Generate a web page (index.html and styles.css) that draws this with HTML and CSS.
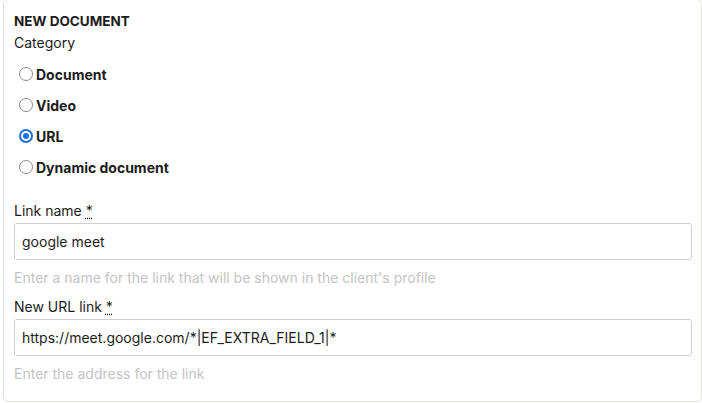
FILE: index.html
```html
<!DOCTYPE html>
<html lang="en">
<head>
<meta charset="utf-8">
<title>New document</title>
<link rel="stylesheet" href="styles.css">
</head>
<body>
<div class="card">
  <h2 class="title">NEW DOCUMENT</h2>
  <div class="group-label">Category</div>
  <div class="radios">
    <label class="radio"><input type="radio" name="cat"><span>Document</span></label>
    <label class="radio"><input type="radio" name="cat"><span>Video</span></label>
    <label class="radio"><input type="radio" name="cat" checked><span>URL</span></label>
    <label class="radio"><input type="radio" name="cat"><span>Dynamic document</span></label>
  </div>
  <div class="field">
    <label class="label">Link name <abbr title="required">*</abbr></label>
    <input class="input" type="text" value="google meet">
    <div class="help">Enter a name for the link that will be shown in the client's profile</div>
  </div>
  <div class="field">
    <label class="label">New URL link <abbr title="required">*</abbr></label>
    <input class="input" type="text" value="https://meet.google.com/*|EF_EXTRA_FIELD_1|*">
    <div class="help">Enter the address for the link</div>
  </div>
</div>
</body>
</html>
```
FILE: styles.css
```css
html, body {
  margin: 0;
  padding: 0;
  background: #ffffff;
}
body {
  font-family: Inter, "Liberation Sans", sans-serif;
  color: #1c1c1c;
  font-size: 14px;
}
.card {
  box-sizing: border-box;
  width: 699px;
  height: 403px;
  margin: -1px 0 0 3px;
  border: 1px solid #e4e2da;
  border-radius: 5px;
  padding: 12px 9px 0 10px;
}
.title {
  margin: 0;
  font-size: 13.5px;
  font-weight: 700;
  line-height: 18px;
}
.group-label {
  font-size: 14px;
  line-height: 18px;
  margin-top: 4px;
}
.radios {
  display: flex;
  flex-direction: column;
  gap: 13px;
  margin-top: 13px;
}
.radio {
  display: flex;
  align-items: center;
  gap: 3px;
  height: 18px;
  font-weight: 700;
  font-size: 14px;
  padding-left: 5px;
}
.radio input {
  appearance: none;
  -webkit-appearance: none;
  box-sizing: border-box;
  margin: 0;
  width: 14px;
  height: 14px;
  border: 1.7px solid #8a8a90;
  border-radius: 50%;
  background: #fff;
  display: grid;
  place-items: center;
}
.radio input:checked {
  border: 2px solid #1a6fe0;
}
.radio input:checked::after {
  content: "";
  width: 6px;
  height: 6px;
  border-radius: 50%;
  background: #1a6fe0;
}
.field {
  display: flex;
  flex-direction: column;
}
.radios + .field {
  margin-top: 26px;
}
.field + .field {
  margin-top: 11px;
}
.label {
  font-size: 14px;
  line-height: 18px;
}
.label abbr {
  text-decoration: underline dotted;
  text-underline-offset: 2px;
}
.input {
  box-sizing: border-box;
  margin-top: 3px;
  height: 37px;
  border: 1px solid #cfcfcf;
  border-radius: 3px;
  padding: 0 7px;
  font-family: inherit;
  font-size: 14px;
  color: #1c1c1c;
  outline: none;
}
.help {
  margin-top: 9px;
  font-size: 14px;
  line-height: 18px;
  color: #c4c4c4;
}
```
